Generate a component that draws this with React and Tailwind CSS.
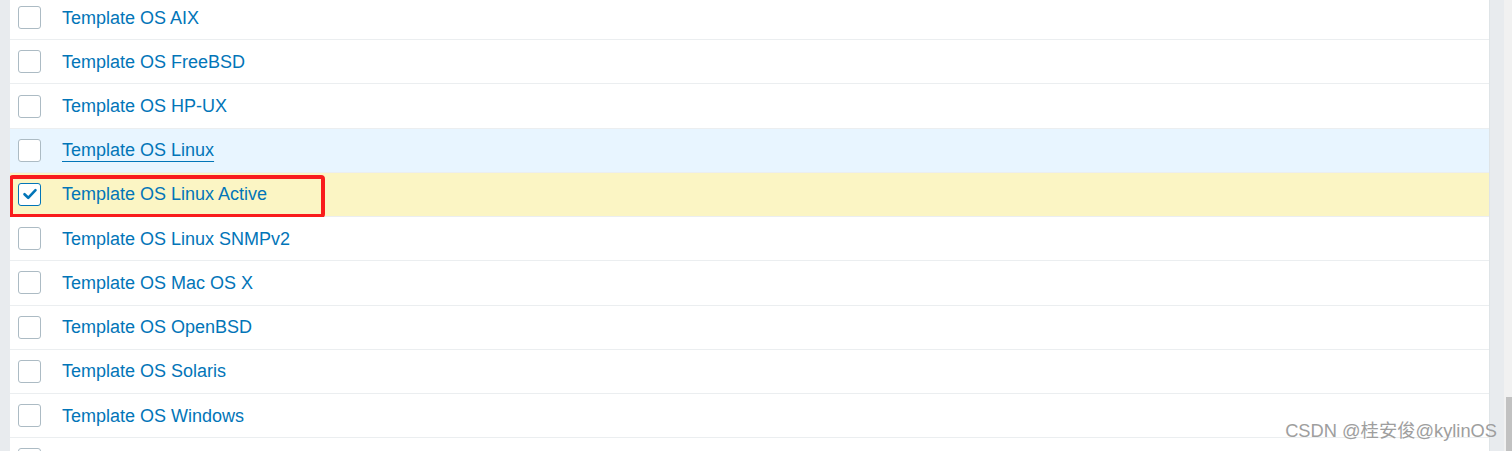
import React from "react";

const rows = [
  { name: "Template OS AIX" },
  { name: "Template OS FreeBSD" },
  { name: "Template OS HP-UX" },
  { name: "Template OS Linux", hover: true },
  { name: "Template OS Linux Active", selected: true },
  { name: "Template OS Linux SNMPv2" },
  { name: "Template OS Mac OS X" },
  { name: "Template OS OpenBSD" },
  { name: "Template OS Solaris" },
  { name: "Template OS Windows" },
  { name: "" },
];

function Checkbox({ checked }) {
  return (
    <div
      className={
        "w-[23px] h-[23px] rounded-[3px] border bg-white flex items-center justify-center shrink-0 " +
        (checked ? "border-[#0275b8]" : "border-[#acbbc4]")
      }
    >
      {checked && (
        <svg width="16" height="16" viewBox="0 0 16 16">
          <path d="M2.5 8.2 L6.2 11.8 L13.5 4.2" fill="none" stroke="#0275b8" strokeWidth="2.6" strokeLinecap="round" strokeLinejoin="round" />
        </svg>
      )}
    </div>
  );
}

export default function App() {
  return (
    <div className="relative flex h-[451px] w-[1512px] overflow-hidden bg-[#e8ebee]" style={{ fontFamily: '"Liberation Sans", Arial, sans-serif' }}>
      <div className="w-[10px] shrink-0" />
      <div className="w-[1480px] shrink-0 bg-white border-r border-[#dfe4e7] overflow-hidden">
        <div className="-mt-[4px]">
          {rows.map((r, i) => (
            <div
              key={i}
              className={
                "relative h-[44.22px] border-b border-[#ebeef0] flex items-center pl-[8px] " +
                (r.selected ? "bg-[#fbf5c4]" : r.hover ? "bg-[#e8f5ff]" : "bg-white")
              }
            >
              <Checkbox checked={r.selected} />
              {r.name && (
                <span
                  className={
                    "ml-[21px] text-[18px] leading-none text-[#0275b8] " +
                    (r.hover ? "underline underline-offset-[5px] decoration-1" : "")
                  }
                >
                  {r.name}
                </span>
              )}
              {r.selected && (
                <div className="absolute left-[-1px] top-[2px] w-[316px] h-[43px] border-4 border-[#f91c1c] rounded-[4px]" />
              )}
            </div>
          ))}
        </div>
      </div>
      <div className="w-[14px] shrink-0 bg-[#e8ebee]" />
      <div className="w-[8px] shrink-0 bg-[#f1f1f1] flex flex-col justify-end pl-[2px]">
        <div className="h-[54px] bg-[#c1c1c1]" />
      </div>
      <div
        className="absolute top-[421px] right-[15px] text-[18.3px] leading-[20px] text-[#9e9e9e] whitespace-nowrap"
        style={{ fontFamily: '"Liberation Sans", Arial, "Noto Sans CJK SC", sans-serif' }}
      >
        CSDN @桂安俊@kylinOS
      </div>
    </div>
  );
}
